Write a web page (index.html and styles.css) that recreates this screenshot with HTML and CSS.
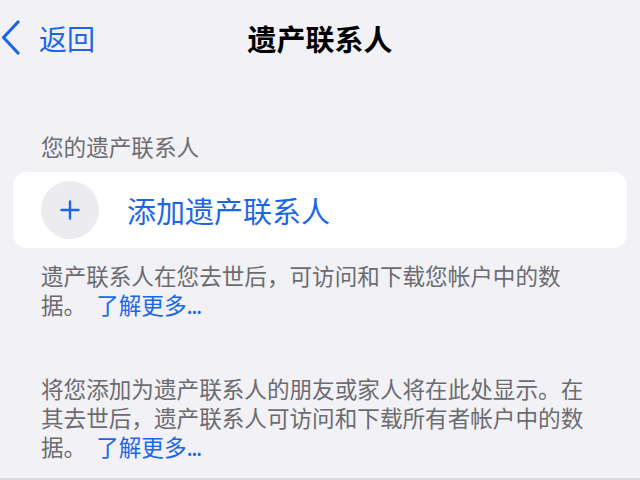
FILE: index.html
```html
<!DOCTYPE html>
<html lang="zh-CN">
<head>
<meta charset="utf-8">
<title>遗产联系人</title>
<link rel="stylesheet" href="styles.css">
</head>
<body>
<div class="screen">
  <header class="nav">
    <a class="back">
      <svg class="chev" width="22" height="36" viewBox="0 0 22 36"><path d="M18 2 L3.5 17.5 L18 33" fill="none" stroke="#1b66e6" stroke-width="3.2" stroke-linecap="round" stroke-linejoin="round"/></svg>
      <span class="back-text">返回</span>
    </a>
    <h1 class="title">遗产联系人</h1>
    <div class="spacer"></div>
  </header>

  <div class="section-head">您的遗产联系人</div>
  <div class="card">
    <div class="add-circle">
      <svg width="22" height="22" viewBox="0 0 22 22"><path d="M11 2.5 V19.5 M2.5 11 H19.5" stroke="#1b66e6" stroke-width="2.4" stroke-linecap="round"/></svg>
    </div>
    <span class="add-text">添加遗产联系人</span>
  </div>
  <p class="note first">遗产联系人在您去世后，可访问和下载您帐户中的数<br>据。<a class="more">了解更多<span class="dots">...</span></a></p>

  <p class="note second">将您添加为遗产联系人的朋友或家人将在此处显示。在其去世后，遗产联系人可访问和下载所有者帐户中的数据。<a class="more">了解更多<span class="dots">...</span></a></p>
</div>
</body>
</html>
```

FILE: styles.css
```css
html, body {
  margin: 0;
  padding: 0;
}
body {
  background: #f1f1f6;
  font-family: "Noto Sans CJK SC", "Noto Sans", sans-serif;
  width: 640px;
  height: 480px;
  overflow: hidden;
}
.screen {
  height: 478px;
  border-bottom: 2px solid #dcdce0;
}
.nav {
  height: 76px;
  display: grid;
  grid-template-columns: 1fr auto 1fr;
  align-items: center;
}
.back {
  display: flex;
  align-items: center;
  color: #1b66e6;
  padding-left: 0;
}
.chev {
  display: block;
}
.back-text {
  font-size: 28px;
  margin-left: 17px;
  line-height: 34px;
}
.title {
  margin: 0;
  font-size: 29px;
  font-weight: 700;
  color: #000;
  line-height: 34px;
}
.section-head {
  margin-top: 56px;
  padding-left: 41px;
  font-size: 22.6px;
  line-height: 29px;
  color: #6d6d72;
}
.card {
  margin: 11px 13px 0;
  height: 76px;
  background: #fff;
  border-radius: 14px;
  display: flex;
  align-items: center;
  padding-left: 28px;
}
.add-circle {
  width: 58px;
  height: 58px;
  border-radius: 50%;
  background: #ebebf0;
  display: flex;
  align-items: center;
  justify-content: center;
}
.add-text {
  margin-left: 28px;
  font-size: 29px;
  color: #1b66e6;
}
.note {
  margin: 0;
  padding: 0 40px 0 41px;
  font-size: 22.6px;
  line-height: 29px;
  color: #6c6c70;
}
.note.first {
  margin-top: 13px;
}
.note.second {
  margin-top: 55px;
}
.more {
  display: inline-block;
  color: #1b66e6;
  margin-left: 10px;
  line-height: 29px;
}
.dots {
  letter-spacing: -1.5px;
}
```
